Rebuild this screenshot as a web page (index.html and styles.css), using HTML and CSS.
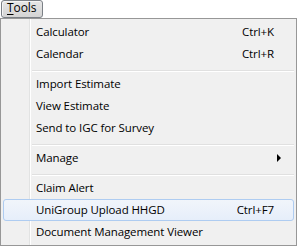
FILE: index.html
```html
<!DOCTYPE html>
<html>
<head>
	<meta charset="utf-8">
	<title>Tools menu</title>
	<link rel="stylesheet" href="styles.css">
</head>
<body>
	<div class="menubar">
		<span class="bar-item"><u>T</u>ools</span>
	</div>
	<div class="menu">
		<div class="item"><span class="label">Calculator</span><span class="key">Ctrl+K</span></div>
		<div class="item"><span class="label">Calendar</span><span class="key">Ctrl+R</span></div>
		<div class="sep"></div>
		<div class="item"><span class="label">Import Estimate</span></div>
		<div class="item"><span class="label">View Estimate</span></div>
		<div class="item"><span class="label">Send to IGC for Survey</span></div>
		<div class="sep"></div>
		<div class="item"><span class="label">Manage</span><span class="arrow"></span></div>
		<div class="sep"></div>
		<div class="item"><span class="label">Claim Alert</span></div>
		<div class="item hot"><span class="label">UniGroup Upload HHGD</span><span class="key">Ctrl+F7</span></div>
		<div class="item"><span class="label">Document Management Viewer</span></div>
	</div>
</body>
</html>
```

FILE: styles.css
```css
body{
	margin: 0;
	background: #ffffff;
	font: 11.5px/1 "Open Sans", "Noto Sans", Arial, sans-serif;
	letter-spacing: -0.1px;
	color: #000000;
	width: 297px;
	height: 247px;
	overflow: hidden;
}

/* Menu bar */
.menubar{
	height: 18px;
	padding-left: 1px;
}

.bar-item{
	display: inline-block;
	box-sizing: border-box;
	height: 18px;
	width: 42px;
	padding: 1px 0 0 5px;
	font-size: 12px;
	border: 1px solid #7b8086;
	border-radius: 3px;
	background: linear-gradient(#e6e6e6, #d4d4d4);
	box-shadow: inset 1px 1px 0 #f4f4f4;
}

.bar-item u{
	text-decoration-thickness: 1px;
	text-underline-offset: 2px;
}

/* Dropdown */
.menu{
	box-sizing: border-box;
	width: 297px;
	height: 228px;
	padding: 2px 2px;
	border: 1px solid #979797;
	background: linear-gradient(to right, #f0f0f0 28px, #e2e3e3 28px, #e2e3e3 29px, #ffffff 29px, #ffffff 30px, #f0f0f0 30px);
}

.item{
	box-sizing: border-box;
	height: 22px;
	display: flex;
	align-items: center;
	padding: 0 19px 0 32px;
	border: 1px solid transparent;
	border-radius: 3px;
}

.item .label{
	flex: 1;
}

.item.hot{
	border-color: #aeccf1;
	background: linear-gradient(#f1f5fb, #e6eefa);
}

.key{
	text-align: right;
}

.arrow{
	width: 0;
	height: 0;
	margin-right: -7px;
	border-top: 4px solid transparent;
	border-bottom: 4px solid transparent;
	border-left: 4px solid #000000;
}

.sep{
	height: 8px;
	margin-left: 29px;
	background: linear-gradient(#f0f0f0 5px, #e0e0e0 5px, #e0e0e0 6px, #ffffff 6px, #ffffff 7px, #f0f0f0 7px);
}
```
